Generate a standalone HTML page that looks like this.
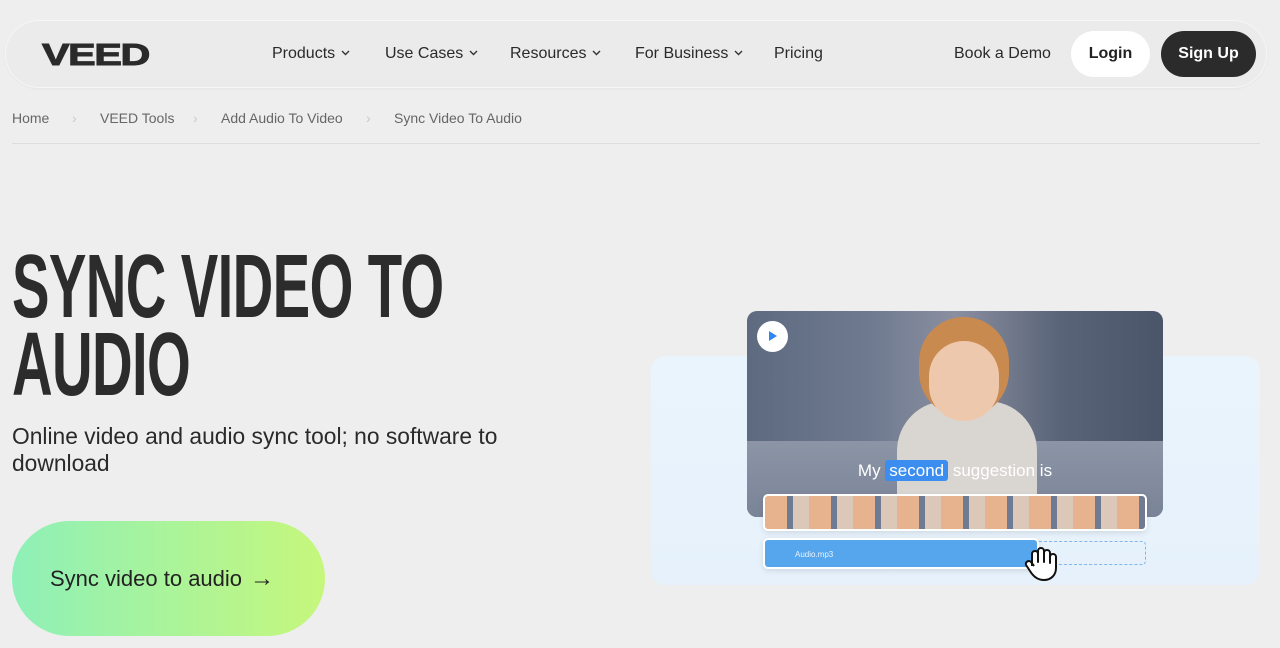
<!DOCTYPE html>
<html><head><style>
*{margin:0;padding:0;box-sizing:border-box}
body{width:1280px;height:648px;overflow:hidden;background:#edeeed;font-family:"Liberation Sans",sans-serif;color:#222;position:relative}
.nav{position:absolute;left:5px;top:20px;width:1262px;height:68px;border-radius:34px;background:#eaebea;border:1px solid #f6f6f6;box-shadow:0 1px 2px rgba(0,0,0,.04)}
.logo{position:absolute;left:42px;top:37px;font-weight:900;font-size:31px;letter-spacing:-1px;color:#2a2a2a;transform:scaleX(1.33);transform-origin:left;-webkit-text-stroke:1px #2a2a2a}
.nl{position:absolute;top:45px;font-size:16px;color:#2a2a2a}
.nl svg{margin-left:6px;vertical-align:2px}
.btn{position:absolute;top:31px;height:46px;border-radius:23px;font-size:16px;font-weight:bold;display:flex;align-items:center;justify-content:center}
.bc{position:absolute;top:110px;font-size:14px;color:#666}
.sep{position:absolute;top:110px;font-size:14px;color:#c8c8c8}
h1{position:absolute;left:12px;top:248px;font-size:90px;line-height:78px;font-weight:bold;color:#2c2c2c;transform:scaleX(.625);transform-origin:left top;white-space:nowrap;letter-spacing:-1px}
.sub{position:absolute;left:12px;top:423px;font-size:22.8px;line-height:27px;color:#2a2a2a;width:520px}
.cta{position:absolute;left:12px;top:521px;width:313px;height:115px;border-radius:58px;background:linear-gradient(90deg,#8ef0b8,#c6f77c);font-size:22px;color:#222;display:flex;align-items:center;padding-left:38px}
</style></head><body>
<div class="nav"></div>
<div class="logo">VEED</div>
<div class="nl" style="left:272px">Products<svg width="9" height="6"><path d="M1 1l3.5 3.5L8 1" stroke="#333" stroke-width="1.4" fill="none"/></svg></div>
<div class="nl" style="left:385px">Use Cases<svg width="9" height="6"><path d="M1 1l3.5 3.5L8 1" stroke="#333" stroke-width="1.4" fill="none"/></svg></div>
<div class="nl" style="left:510px">Resources<svg width="9" height="6"><path d="M1 1l3.5 3.5L8 1" stroke="#333" stroke-width="1.4" fill="none"/></svg></div>
<div class="nl" style="left:635px">For Business<svg width="9" height="6"><path d="M1 1l3.5 3.5L8 1" stroke="#333" stroke-width="1.4" fill="none"/></svg></div>
<div class="nl" style="left:774px">Pricing</div>
<div class="nl" style="left:954px">Book a Demo</div>
<div class="btn" style="left:1071px;width:79px;background:#fff;color:#222">Login</div>
<div class="btn" style="left:1161px;width:95px;background:#2b2b2b;color:#fff">Sign Up</div>
<div class="bc" style="left:12px">Home</div><div class="sep" style="left:72px">›</div>
<div class="bc" style="left:100px">VEED Tools</div><div class="sep" style="left:193px">›</div>
<div class="bc" style="left:221px">Add Audio To Video</div><div class="sep" style="left:366px">›</div>
<div class="bc" style="left:394px">Sync Video To Audio</div>
<div style="position:absolute;left:12px;top:143px;width:1248px;height:1px;background:#dcdddc"></div>
<h1>SYNC VIDEO TO<br>AUDIO</h1>
<div class="sub">Online video and audio sync tool; no software to download</div>
<div class="cta">Sync video to audio <span style="margin-left:8px;font-size:24px">→</span></div>

<div style="position:absolute;left:651px;top:356px;width:609px;height:229px;border-radius:14px;background:linear-gradient(180deg,#eaf4fc,#e6f1fb)"></div>
<div style="position:absolute;left:747px;top:311px;width:416px;height:206px;border-radius:10px;overflow:hidden;background:linear-gradient(90deg,#5d6a80 0%,#6f7a90 30%,#8a8fa0 50%,#5a6478 75%,#4b556a 100%)">
 <div style="position:absolute;left:0;top:130px;width:416px;height:76px;background:linear-gradient(180deg,#8c95a6,#7a8497)"></div>
 <div style="position:absolute;left:150px;top:90px;width:140px;height:116px;border-radius:50px 50px 0 0;background:#d9d6d2"></div>
 <div style="position:absolute;left:172px;top:6px;width:90px;height:100px;border-radius:45px;background:#c98a50"></div>
 <div style="position:absolute;left:182px;top:30px;width:70px;height:80px;border-radius:35px;background:#eec8ac"></div>
 <div style="position:absolute;left:10px;top:10px;width:31px;height:31px;border-radius:50%;background:#fff"></div>
 <svg style="position:absolute;left:21px;top:19px" width="10" height="12"><path d="M1 1L9 6 1 11z" fill="#2e86f0"/></svg>
 <div style="position:absolute;left:0;top:150px;width:416px;text-align:center;color:#fff;font-size:17px">My <span style="background:#3b8ef0;border-radius:3px;padding:1px 4px">second</span> suggestion is</div>
</div>
<div style="position:absolute;left:763px;top:494px;width:384px;height:37px;border-radius:5px;border:2px solid #fff;background:repeating-linear-gradient(90deg,#e6b38e 0 22px,#6e7b92 22px 28px,#dcc8b8 28px 44px);box-shadow:0 2px 6px rgba(0,0,0,.1)"></div>
<div style="position:absolute;left:1035px;top:541px;width:111px;height:24px;border:1.5px dashed #7fb6ee;border-radius:4px"></div>
<div style="position:absolute;left:763px;top:538px;width:276px;height:31px;border-radius:5px;border:2px solid #fff;background:#56a6ee;box-shadow:0 2px 6px rgba(0,0,0,.1);color:#eaf4ff;font-size:8px;padding:10px 0 0 30px">Audio.mp3</div>
<svg style="position:absolute;left:1024px;top:546px" width="34" height="36"><path d="M8 20V8a3 3 0 016 0v8V5a3 3 0 016 0v11V7a3 3 0 016 0v10-6a3 3 0 016 0v11c0 7-5 12-12 12s-11-4-14-9l-4-6a3 3 0 015-3l3 4" fill="#fff" stroke="#111" stroke-width="2" stroke-linejoin="round"/></svg>
</body></html>
